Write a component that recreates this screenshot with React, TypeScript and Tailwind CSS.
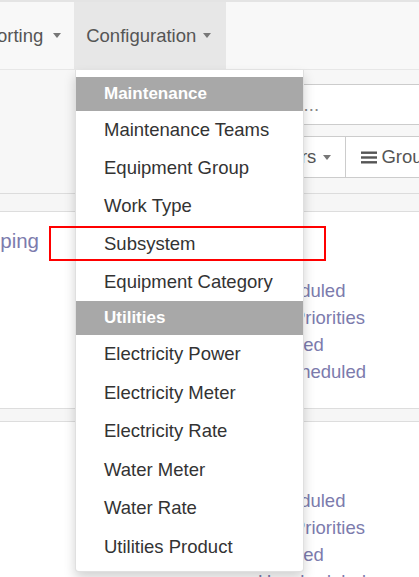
import React from 'react'

const maintenanceItems = ['Maintenance Teams', 'Equipment Group', 'Work Type', 'Subsystem', 'Equipment Category']
const utilitiesItems = ['Electricity Power', 'Electricity Meter', 'Electricity Rate', 'Water Meter', 'Water Rate', 'Utilities Product']
const stats = ['Scheduled', 'Top Priorities', 'Blocked', 'Unscheduled']

function Caret() {
  return <span className="inline-block w-0 h-0 border-t-[5px] border-t-[#777] border-x-[4px] border-x-transparent" />
}

function Card({ title, height }: { title: string; height: string }) {
  return (
    <div className={`bg-white border-y border-[#ddd] grid grid-cols-[258px_1fr] ${height}`}>
      <div className="pt-[17px]">
        <div className="-ml-[18px] text-[20.5px] leading-[24px] text-[#7c7bad]">{title}</div>
      </div>
      <div className="pt-[65px] text-[18.5px] leading-[27px] text-[#7c7bad] whitespace-nowrap">
        {stats.map(s => (
          <div key={s}>{s}</div>
        ))}
      </div>
    </div>
  )
}

export default function App() {
  return (
    <div className="relative w-[419px] h-[577px] overflow-hidden bg-[#f6f6f6] font-['Liberation_Sans',Arial,sans-serif]">
      {/* navbar */}
      <nav className="h-[70px] bg-[#f8f8f8] border-t-2 border-t-[#e4e4e4] border-b border-b-[#e7e7e7] flex text-[18.5px] text-[#555]">
        <div className="-ml-[50px] flex">
          <div className="flex items-center gap-[10px] pl-[13px] pr-[13px]">
            <span>Reporting</span>
            <Caret />
          </div>
          <div className="flex items-center gap-[7px] pl-[12px] pr-[15px] bg-[#e7e7e7]">
            <span>Configuration</span>
            <Caret />
          </div>
        </div>
      </nav>

      {/* control panel */}
      <div className="bg-[#f7f7f7] border-b border-[#dcdcdc] pt-[14px] pb-[15px] flex flex-col gap-[11px]">
        <div className="ml-[236px] -mr-[20px] h-[41px] bg-white border border-[#ccc] flex items-center pl-[8px] text-[18.5px] text-[#888]">
          Search...
        </div>
        <div className="ml-[253px] h-[42px] flex text-[18.5px] text-[#555]">
          <div className="shrink-0 bg-white border border-[#ccc] flex items-center gap-[7px] pl-[12px] pr-[14px]">
            <span>Filters</span>
            <Caret />
          </div>
          <div className="shrink-0 bg-white border border-l-0 border-[#ccc] flex items-center gap-[4px] pl-[15px] pr-[12px] whitespace-nowrap">
            <svg width="16" height="13" viewBox="0 0 16 13" fill="#555">
              <rect x="0" y="0.5" width="16" height="2.4" />
              <rect x="0" y="5.3" width="16" height="2.4" />
              <rect x="0" y="10.1" width="16" height="2.4" />
            </svg>
            <span>Group By</span>
          </div>
        </div>
      </div>

      {/* kanban */}
      <div className="pt-[17px] flex flex-col gap-[12px]">
        <Card title="Piping" height="h-[198px]" />
        <Card title="" height="h-[200px]" />
      </div>

      {/* dropdown */}
      <div className="absolute left-[75px] top-[70px] w-[229px] h-[502px] bg-white rounded-b-[4px] border border-[rgba(0,0,0,0.12)] border-t-0 shadow-[0_6px_12px_rgba(0,0,0,0.175)] pt-[7px]">
        <div className="h-[34px] bg-[#a8a8a8] flex items-center pl-[28px] text-[17px] font-bold text-white">Maintenance</div>
        {maintenanceItems.map(item => (
          <div key={item} className="h-[38px] flex items-center pl-[28px] text-[18.5px] text-[#333]">
            {item}
          </div>
        ))}
        <div className="h-[34px] bg-[#a8a8a8] flex items-center pl-[28px] text-[17px] font-bold text-white">Utilities</div>
        {utilitiesItems.map(item => (
          <div key={item} className="h-[38.5px] flex items-center pl-[28px] text-[18.5px] text-[#333]">
            {item}
          </div>
        ))}
      </div>

      {/* highlight */}
      <div className="absolute left-[49px] top-[226px] w-[277px] h-[35px] border-2 border-[#ff0000]" />
    </div>
  )
}
